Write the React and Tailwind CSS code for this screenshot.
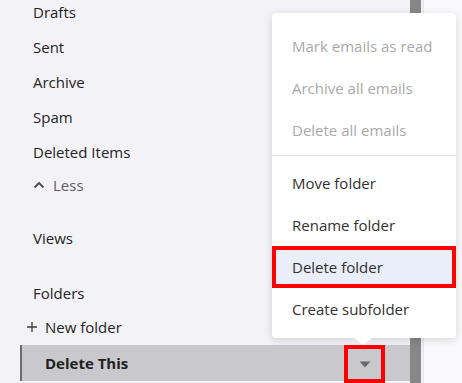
import { useState } from "react"

const font = { fontFamily: '"Open Sans", "Noto Sans", sans-serif' }

function NavItem({ label, className = "" }) {
  return (
    <div className={"h-[35px] flex items-center pl-[33px] text-[15px] text-[#252423] " + className}>
      {label}
    </div>
  )
}

function MenuItem({ label, disabled, active }) {
  return (
    <div
      className={
        "h-[42px] flex items-center pl-[20px] text-[15px] " +
        (disabled ? "text-[#a9a9a9] " : "text-[#323130] ") +
        (active ? "bg-[#e9eef9] ring-4 ring-inset ring-[#ff0000]" : "")
      }
    >
      {label}
    </div>
  )
}

function App() {
  let [folders] = useState(["Drafts", "Sent", "Archive", "Spam", "Deleted Items"])

  return (
    <div className="relative w-[462px] h-[383px] overflow-hidden flex bg-[#f3f3f7]" style={font}>
      {/* left folder pane */}
      <div className="w-[410px] flex flex-col">
        <div className="mt-[-5px]">
          {folders.map((f) => <NavItem key={f} label={f} />)}
        </div>
        <div className="h-[30px] flex items-center pl-[33px] gap-[8px] text-[15px] text-[#605e5c]">
          <svg width="12" height="8" viewBox="0 0 12 8">
            <path d="M1.5 6.5 L6 2 L10.5 6.5" fill="none" stroke="#4a4a4a" strokeWidth="1.8" />
          </svg>
          <span>Less</span>
        </div>
        <NavItem label="Views" className="mt-[20px] h-[36px]" />
        <NavItem label="Folders" className="mt-[19px] h-[36px]" />
        <div className="h-[32px] flex items-center pl-[26px] gap-[7px] text-[15px] text-[#252423]">
          <svg width="12" height="12" viewBox="0 0 12 12">
            <path d="M6 1 V11 M1 6 H11" stroke="#3b3a39" strokeWidth="1.3" />
          </svg>
          <span>New folder</span>
        </div>
        <div className="mt-[2px] ml-[20px] h-[36px] flex items-center bg-[#c8c8cd] border-l-2 border-[#6b6b70]">
          <span className="pl-[23px] text-[15px] font-bold text-[#201f1e]">Delete This</span>
          <div className="ml-auto mr-[25px] w-[41px] h-[38px] mt-[2px] flex items-center justify-center ring-4 ring-inset ring-[#ff0000]">
            <svg width="12" height="7" viewBox="0 0 12 7">
              <path d="M0.5 0.5 H11.5 L6 6.5 Z" fill="#6a6a6e" />
            </svg>
          </div>
        </div>
      </div>
      {/* scrollbar */}
      <div className="w-[11px] bg-[#878787]" />
      <div className="w-[2px] bg-[#f3f3f7]" />
      <div className="flex-1 bg-[#f9f9fb] border-l border-[#e3e3e6]" />

      {/* context menu */}
      <div className="absolute left-[272px] top-[13px] w-[184px] h-[325px] bg-white rounded-[4px] shadow-[0_2px_8px_rgba(0,0,0,0.14)] pt-[12px]">
        <MenuItem label="Mark emails as read" disabled />
        <MenuItem label="Archive all emails" disabled />
        <MenuItem label="Delete all emails" disabled />
        <div className="mt-[4px] mb-[6px] h-px bg-[#e1e1e1]" />
        <MenuItem label="Move folder" />
        <MenuItem label="Rename folder" />
        <MenuItem label="Delete folder" active />
        <MenuItem label="Create subfolder" />
        <div className="absolute left-[82px] bottom-[-7px] w-0 h-0 border-l-[9px] border-r-[9px] border-t-[7px] border-l-transparent border-r-transparent border-t-white" />
      </div>
    </div>
  )
}

export default App
